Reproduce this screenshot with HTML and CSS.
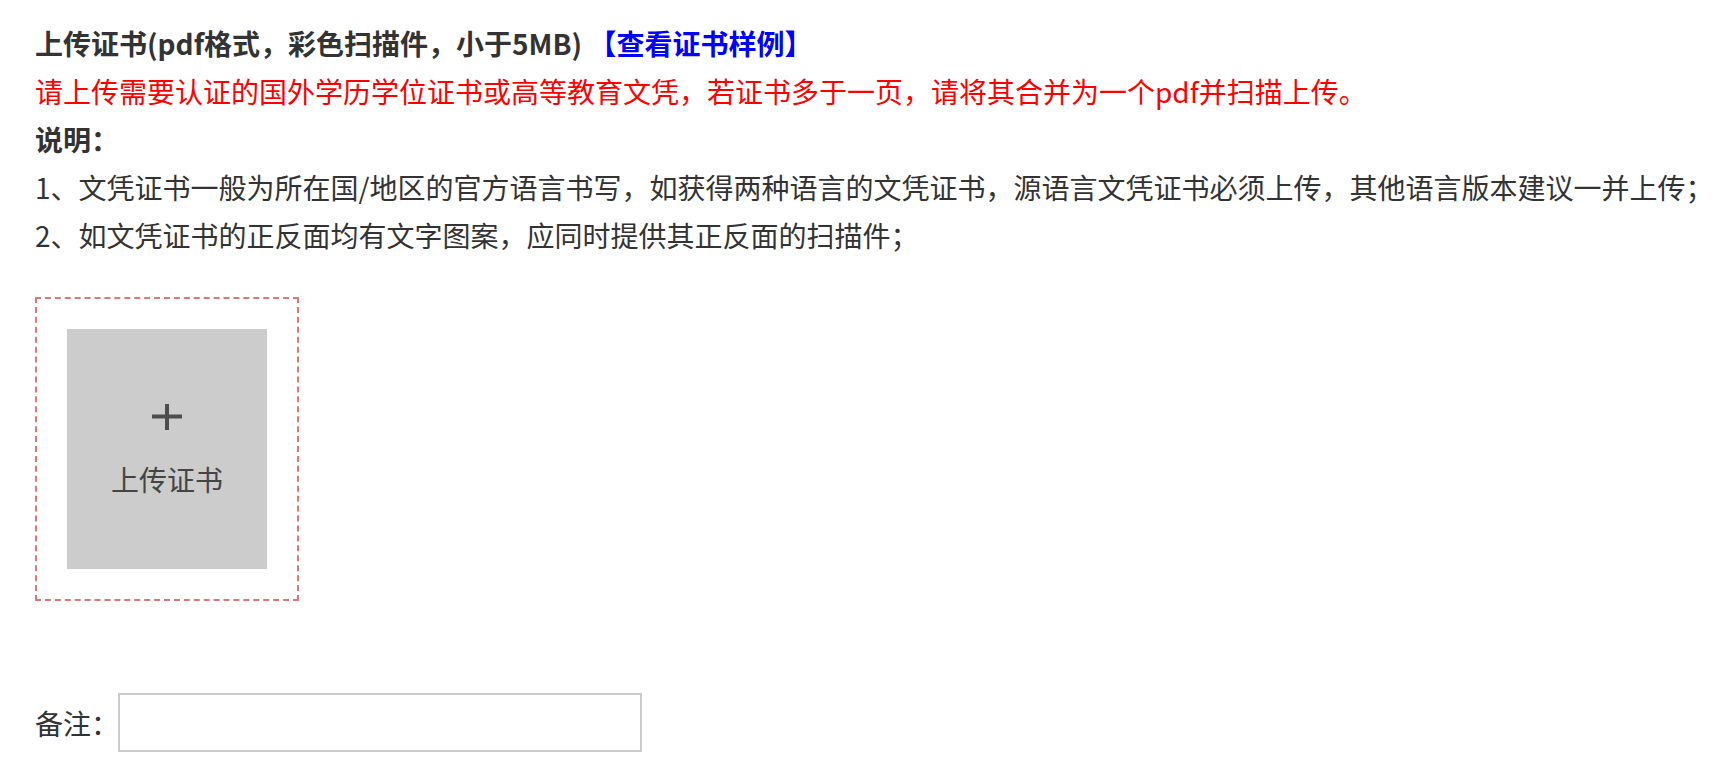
FILE: index.html
```html
<!DOCTYPE html>
<html lang="zh-CN">
<head>
<meta charset="utf-8">
<title>上传证书</title>
<link rel="stylesheet" href="styles.css">
</head>
<body>
<div class="page">
  <div class="intro">
    <p class="line title">上传证书(pdf格式，彩色扫描件，小于5MB) <a class="sample" href="#">【查看证书样例】</a></p>
    <p class="line warn">请上传需要认证的国外学历学位证书或高等教育文凭，若证书多于一页，请将其合并为一个pdf并扫描上传。</p>
    <p class="line title">说明：</p>
    <p class="line">1、文凭证书一般为所在国/地区的官方语言书写，如获得两种语言的文凭证书，源语言文凭证书必须上传，其他语言版本建议一并上传；</p>
    <p class="line">2、如文凭证书的正反面均有文字图案，应同时提供其正反面的扫描件；</p>
  </div>
  <div class="upload-box">
    <div class="upload-tile">
      <svg class="plus" width="30" height="26" viewBox="0 0 30 26"><rect x="0" y="10.5" width="30" height="4" fill="#4d4d4d"/><rect x="13" y="0" width="4" height="26" fill="#4d4d4d"/></svg>
      <span class="upload-label">上传证书</span>
    </div>
  </div>
  <div class="remark">
    <label class="remark-label" for="remark">备注：</label>
    <input class="remark-input" id="remark" type="text">
  </div>
</div>
</body>
</html>
```
FILE: styles.css
```css
html, body {
  margin: 0;
  padding: 0;
  background: #fff;
}
body {
  font-family: "Noto Sans CJK SC", "Noto Sans", sans-serif;
  color: #333;
}
.page {
  padding: 19px 0 0 35px;
}
.intro {
  display: flex;
  flex-direction: column;
}
.line {
  margin: 0;
  font-size: 28px;
  line-height: 48px;
  white-space: nowrap;
}
.title {
  font-weight: bold;
}
.sample {
  color: #0000ff;
  text-decoration: none;
}
.warn {
  color: #ff0000;
}
.upload-box {
  margin-top: 38px;
  width: 200px;
  padding: 30px;
  border: 2px dashed #de7878;
}
.upload-tile {
  width: 200px;
  height: 240px;
  background: #cccccc;
  display: flex;
  flex-direction: column;
  align-items: center;
  justify-content: flex-start;
  box-sizing: border-box;
  padding-top: 75px;
}
.plus {
  display: block;
}
.upload-label {
  margin-top: 31px;
  font-size: 28px;
  line-height: 36px;
  color: #444;
}
.remark {
  margin-top: 92px;
  display: flex;
  align-items: center;
}
.remark-label {
  flex-shrink: 0;
  white-space: nowrap;
  font-size: 28px;
  line-height: 48px;
  color: #333;
}
.remark-input {
  flex-shrink: 0;
  width: 524px;
  height: 59px;
  box-sizing: border-box;
  border: 2px solid #cccccc;
  margin: 0 0 0 -1px;
  padding: 0 8px;
  outline: none;
  background: #fff;
}
```
